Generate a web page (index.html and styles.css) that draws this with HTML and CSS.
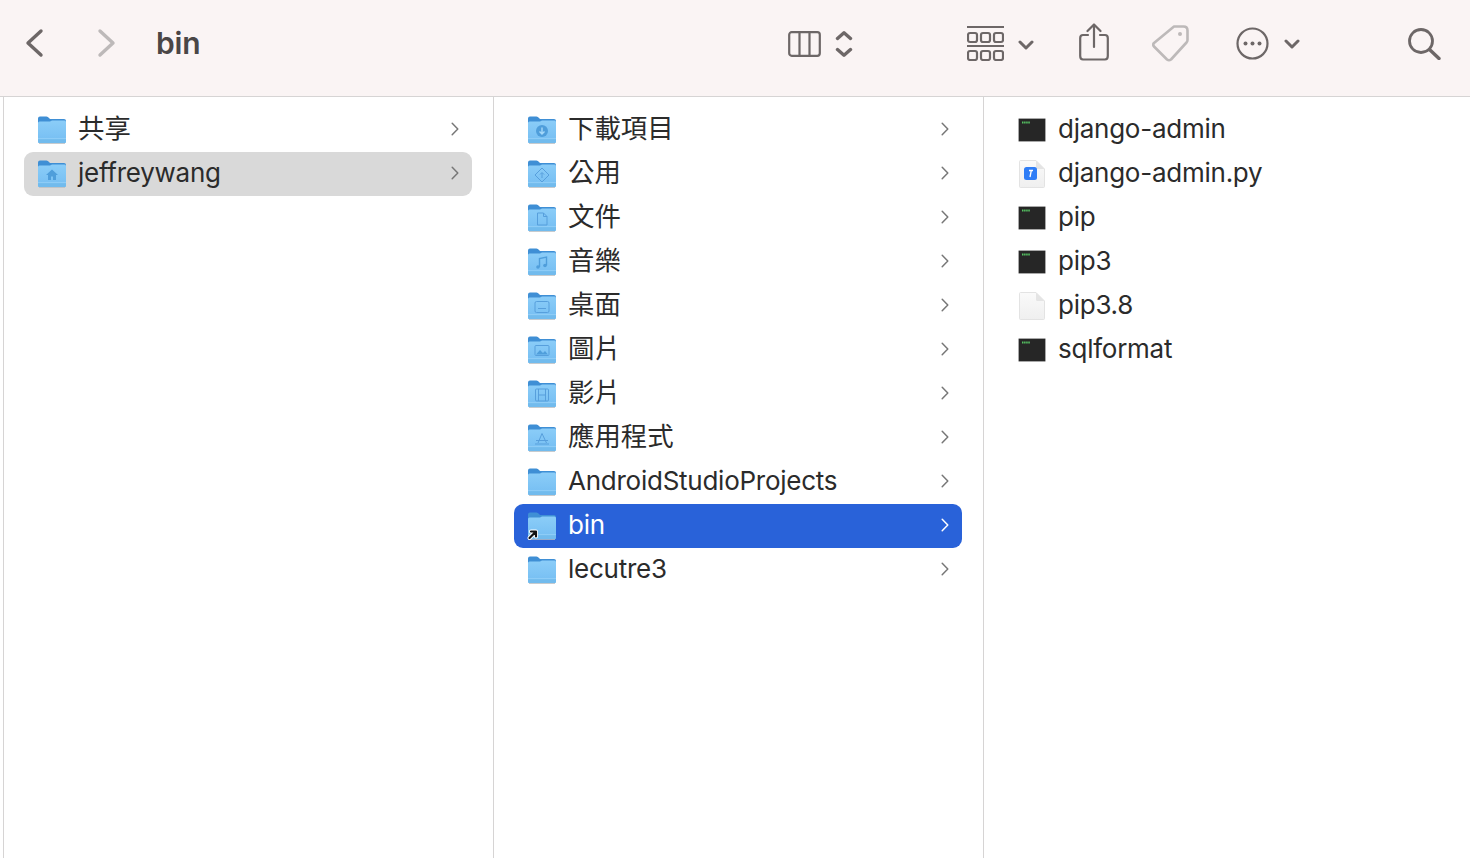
FILE: index.html
```html
<!DOCTYPE html>
<html lang="zh-Hant">
<head>
    <meta charset="UTF-8">
    <title>bin</title>
    <link rel="stylesheet" href="styles.css">
</head>

<body>
<svg class="defs" width="0" height="0">
    <defs>
        <linearGradient id="body" x1="0" y1="0" x2="0" y2="1">
            <stop offset="0" stop-color="#8bcdf8"/>
            <stop offset="1" stop-color="#74bdf2"/>
        </linearGradient>
        <linearGradient id="paper" x1="0" y1="0" x2="0" y2="1">
            <stop offset="0" stop-color="#fafafa"/>
            <stop offset="1" stop-color="#efefef"/>
        </linearGradient>
        <symbol id="folder" viewBox="0 0 28 28">
            <path d="M0 2.500Q0 .5 2 .5H8.500Q10 .5 11 2L12 3H26Q28 3 28 5V12H0Z" fill="#3f8fd5"/>
            <path d="M0 7Q0 5.500 1.500 5.500H12L14 4.500H26.500Q28 4.500 28 6V25.500Q28 27 26.500 27H1.500Q0 27 0 25.500Z" fill="url(#body)"/>
            <path d="M0 22.500H28V23.200H0Z" fill="#a5d9fa"/>
            <path d="M0 23.200H28V25.500Q28 27 26.500 27H1.500Q0 27 0 25.500Z" fill="#72bbed"/>
            <path d="M1 27H27V27.800H1Z" fill="#b9bec2"/>
        </symbol>
        <symbol id="terminal" viewBox="0 0 28 24">
            <rect x=".5" y=".5" width="27" height="23" rx="1" fill="#262626" stroke="#a8a8a8"/>
            <path d="M4 4.500H12" stroke="#56c463" stroke-width="1.800" stroke-dasharray="1.500 .6"/>
        </symbol>
        <symbol id="paperdoc" viewBox="0 0 26 28">
            <path d="M.5 1.500Q.5 .5 1.500 .5H17L25.500 9V26.500Q25.500 27.500 24.500 27.500H1.500Q.5 27.500 .5 26.500Z" fill="url(#paper)" stroke="#e3e3e3"/>
            <path d="M17 .5V7.500Q17 9 18.500 9H25.500Z" fill="#e4e4e4"/>
        </symbol>
        <symbol id="chev" viewBox="0 0 8 14">
            <path d="M1.200 1.200L6.800 7L1.200 12.800" fill="none" stroke="currentColor" stroke-width="1.500" stroke-linecap="round" stroke-linejoin="round"/>
        </symbol>
        <symbol id="drop" viewBox="0 0 16 10">
            <path d="M2 2L8 8L14 2" fill="none" stroke="currentColor" stroke-width="3" stroke-linecap="round" stroke-linejoin="round"/>
        </symbol>
    </defs>
</svg>

<!--工具列-->
<div class="toolbar">
    <svg class="tool nav-back" width="22" height="30" viewBox="0 0 22 30"><path d="M18 3L5 15L18 27" class="line thick"/></svg>
    <svg class="tool nav-forward" width="22" height="30" viewBox="0 0 22 30"><path d="M4 3L17 15L4 27" class="line thick"/></svg>
    <div class="title">bin</div>

    <svg class="tool view-columns" width="33" height="26" viewBox="0 0 33 26">
        <rect x="1.200" y="1.200" width="30.600" height="23.600" rx="2.500" class="line"/>
        <path d="M11.500 1.500V24.500M21.500 1.500V24.500" class="line"/>
    </svg>
    <svg class="tool view-updown" width="18" height="26" viewBox="0 0 18 26">
        <path d="M2.500 7.500L9 1.800L15.500 7.500M2.500 18.500L9 24.200L15.500 18.500" class="line thick"/>
    </svg>

    <svg class="tool group-by" width="37" height="35" viewBox="0 0 37 35">
        <path d="M0 1H37M0 20H37" class="line"/>
        <g class="line">
            <rect x="1" y="7" width="9" height="9" rx="2"/><rect x="14" y="7" width="9" height="9" rx="2"/><rect x="27" y="7" width="9" height="9" rx="2"/>
            <rect x="1" y="25" width="9" height="9" rx="2"/><rect x="14" y="25" width="9" height="9" rx="2"/><rect x="27" y="25" width="9" height="9" rx="2"/>
        </g>
    </svg>
    <svg class="tool group-drop" width="16" height="10"><use href="#drop"/></svg>

    <svg class="tool share" width="30" height="38" viewBox="0 0 30 38">
        <path d="M9 12H4Q1.200 12 1.200 15V33Q1.200 36.500 4 36.500H26Q28.800 36.500 28.800 33V15Q28.800 12 26 12H21" class="line"/>
        <path d="M15 24V1.500M8.500 8L15 1.500L21.500 8" class="line"/>
    </svg>

    <svg class="tool tag" width="37" height="37" viewBox="0 0 37 37">
        <path d="M22 1.500H31.500Q35.500 1.500 35.500 5.500V15Q35.500 16.500 34.500 17.500L19 34.500Q17 36 15 34.500L2 21.500Q.5 19.500 2 18Z" class="line light"/>
        <circle cx="28" cy="9" r="2" fill="#bdb9b9"/>
    </svg>

    <svg class="tool more" width="33" height="33" viewBox="0 0 33 33">
        <circle cx="16.500" cy="16.500" r="15" class="line"/>
        <circle cx="9.500" cy="16.500" r="2" fill="#6d6767"/><circle cx="16.500" cy="16.500" r="2" fill="#6d6767"/><circle cx="23.500" cy="16.500" r="2" fill="#6d6767"/>
    </svg>
    <svg class="tool more-drop" width="16" height="10"><use href="#drop"/></svg>

    <svg class="tool search" width="33" height="32" viewBox="0 0 33 32">
        <circle cx="13" cy="13" r="11.500" class="line thin-ring"/>
        <path d="M21.500 21.500L31 30.500" class="line thick"/>
    </svg>
</div>

<!--三欄-->
<div class="columns">
    <div class="column">
        <div class="row">
            <svg class="icon" width="28" height="28"><use href="#folder"/></svg>
            <span class="name han">共享</span>
            <svg class="chev" width="8" height="14"><use href="#chev"/></svg>
        </div>
        <div class="row inactive">
            <svg class="icon" viewBox="0 0 28 28" width="28" height="28">
                <use href="#folder" width="28" height="28"/>
                <path d="M14 9.500L8 15H10V20H13V16.500H15V20H18V15H20Z" fill="#4f9edb"/>
            </svg>
            <span class="name">jeffreywang</span>
            <svg class="chev" width="8" height="14"><use href="#chev"/></svg>
        </div>
    </div>

    <div class="column">
        <div class="row">
            <svg class="icon" viewBox="0 0 28 28" width="28" height="28">
                <use href="#folder" width="28" height="28"/>
                <circle cx="14" cy="15" r="6" fill="#4f9edb"/>
                <path d="M14 11.500V17.500M11.500 15.500L14 18L16.500 15.500" fill="none" stroke="#a5d9fa" stroke-width="1.400"/>
            </svg>
            <span class="name han">下載項目</span>
            <svg class="chev" width="8" height="14"><use href="#chev"/></svg>
        </div>
        <div class="row">
            <svg class="icon" viewBox="0 0 28 28" width="28" height="28">
                <use href="#folder" width="28" height="28"/>
                <path d="M14 8L21 15L14 22L7 15Z" class="glyph"/>
                <path d="M14 18V13M12 14.500L14 12.500L16 14.500" class="glyph"/>
            </svg>
            <span class="name han">公用</span>
            <svg class="chev" width="8" height="14"><use href="#chev"/></svg>
        </div>
        <div class="row">
            <svg class="icon" viewBox="0 0 28 28" width="28" height="28">
                <use href="#folder" width="28" height="28"/>
                <path d="M9.500 9H15.500L19 12.500V21H9.500ZM15.500 9V12.500H19" class="glyph"/>
            </svg>
            <span class="name han">文件</span>
            <svg class="chev" width="8" height="14"><use href="#chev"/></svg>
        </div>
        <div class="row">
            <svg class="icon" viewBox="0 0 28 28" width="28" height="28">
                <use href="#folder" width="28" height="28"/>
                <path d="M11.500 19V10.500L18.500 9V17.500" fill="none" stroke="#4f9edb" stroke-width="1.400"/>
                <circle cx="10" cy="19" r="1.800" fill="#4f9edb"/><circle cx="17" cy="17.500" r="1.800" fill="#4f9edb"/>
            </svg>
            <span class="name han">音樂</span>
            <svg class="chev" width="8" height="14"><use href="#chev"/></svg>
        </div>
        <div class="row">
            <svg class="icon" viewBox="0 0 28 28" width="28" height="28">
                <use href="#folder" width="28" height="28"/>
                <rect x="7" y="9.500" width="14" height="11" rx="1.500" class="glyph"/>
                <path d="M10 16.500H18" class="glyph"/>
            </svg>
            <span class="name han">桌面</span>
            <svg class="chev" width="8" height="14"><use href="#chev"/></svg>
        </div>
        <div class="row">
            <svg class="icon" viewBox="0 0 28 28" width="28" height="28">
                <use href="#folder" width="28" height="28"/>
                <rect x="7" y="9.500" width="14" height="10" rx="1" class="glyph"/>
                <path d="M8 18.500L12 14L15 17L17 15L20 18.500Z" fill="#4f9edb"/>
            </svg>
            <span class="name han">圖片</span>
            <svg class="chev" width="8" height="14"><use href="#chev"/></svg>
        </div>
        <div class="row">
            <svg class="icon" viewBox="0 0 28 28" width="28" height="28">
                <use href="#folder" width="28" height="28"/>
                <rect x="7.500" y="9" width="13" height="12" rx="1" class="glyph"/>
                <path d="M10.500 9V21M17.500 9V21M10.500 15H17.500" class="glyph"/>
            </svg>
            <span class="name han">影片</span>
            <svg class="chev" width="8" height="14"><use href="#chev"/></svg>
        </div>
        <div class="row">
            <svg class="icon" viewBox="0 0 28 28" width="28" height="28">
                <use href="#folder" width="28" height="28"/>
                <path d="M14 9.500L10 19M14 9.500L18.500 19M8 16.500H20M7 20H21" class="glyph"/>
            </svg>
            <span class="name han">應用程式</span>
            <svg class="chev" width="8" height="14"><use href="#chev"/></svg>
        </div>
        <div class="row">
            <svg class="icon" width="28" height="28"><use href="#folder"/></svg>
            <span class="name">AndroidStudioProjects</span>
            <svg class="chev" width="8" height="14"><use href="#chev"/></svg>
        </div>
        <div class="row selected">
            <svg class="icon alias" viewBox="0 0 28 28" width="28" height="28">
                <use href="#folder" width="28" height="28"/>
                <path d="M1.500 26L7 20.500M3 19.500H8V24.500" fill="none" stroke="#fff" stroke-width="4" stroke-linecap="round" stroke-linejoin="round"/>
                <path d="M1.500 26L7 20.500M3 19.500H8V24.500" fill="none" stroke="#111" stroke-width="2.200" stroke-linecap="round" stroke-linejoin="round"/>
            </svg>
            <span class="name">bin</span>
            <svg class="chev" width="8" height="14"><use href="#chev"/></svg>
        </div>
        <div class="row">
            <svg class="icon" width="28" height="28"><use href="#folder"/></svg>
            <span class="name">lecutre3</span>
            <svg class="chev" width="8" height="14"><use href="#chev"/></svg>
        </div>
    </div>

    <div class="column">
        <div class="row">
            <svg class="icon" width="28" height="24"><use href="#terminal"/></svg>
            <span class="name">django-admin</span>
        </div>
        <div class="row">
            <svg class="icon doc" viewBox="0 0 26 28" width="26" height="28">
                <use href="#paperdoc" width="26" height="28"/>
                <rect x="5" y="7" width="13" height="13" rx="2.500" fill="#2f7df6"/>
                <path d="M10 10.500H14M12.300 10.500L11 17" fill="none" stroke="#fff" stroke-width="1.300"/>
            </svg>
            <span class="name">django-admin.py</span>
        </div>
        <div class="row">
            <svg class="icon" width="28" height="24"><use href="#terminal"/></svg>
            <span class="name">pip</span>
        </div>
        <div class="row">
            <svg class="icon" width="28" height="24"><use href="#terminal"/></svg>
            <span class="name">pip3</span>
        </div>
        <div class="row">
            <svg class="icon doc" width="26" height="28"><use href="#paperdoc"/></svg>
            <span class="name">pip3.8</span>
        </div>
        <div class="row">
            <svg class="icon" width="28" height="24"><use href="#terminal"/></svg>
            <span class="name">sqlformat</span>
        </div>
    </div>
</div>
</body>
</html>
```

FILE: styles.css
```css
html,
body {
    margin: 0;
    padding: 0;
    height: 100%;
    overflow: hidden;
    background: #fff;
}
body {
    font-family: "Inter", "Noto Sans CJK TC", sans-serif;
    color: #2b2b2b;
}
.defs {
    display: block;
    height: 0;
}

/* toolbar */
.toolbar {
    height: 96px;
    display: flex;
    align-items: flex-start;
    background: #faf4f4;
    border-bottom: 1px solid #d6d4d4;
    color: #6d6767;
}
.tool {
    flex: none;
    display: block;
    color: #6d6767;
}
.line {
    fill: none;
    stroke: #6d6767;
    stroke-width: 2.2;
    stroke-linecap: round;
    stroke-linejoin: round;
}
.thick {
    stroke-width: 3.4;
}
.thin-ring {
    stroke-width: 2.8;
}
.light {
    stroke: #bdb9b9;
    stroke-width: 2.6;
}
.nav-back {
    margin: 28px 0 0 23px;
}
.nav-forward {
    margin: 28px 0 0 51px;
}
.nav-forward path {
    stroke: #bdb9b9;
}
.title {
    width: 632px;
    margin: 24px 0 0 38px;
    font-size: 30px;
    line-height: 38px;
    font-weight: 600;
    letter-spacing: -0.2px;
    color: #4a4646;
}
.view-updown {
    margin: 31px 0 0 14px;
}
.view-columns {
    margin-top: 31px;
}
.group-by {
    margin: 26px 0 0 114px;
}
.group-drop {
    margin: 40px 0 0 14px;
}
.share {
    margin: 23px 0 0 45px;
}
.tag {
    margin: 25px 0 0 43px;
}
.more {
    margin: 27px 0 0 47px;
}
.more-drop {
    margin: 39px 0 0 15px;
}
.search {
    margin: 28px 0 0 108px;
}

/* columns */
.columns {
    display: flex;
    height: 761px;
    padding-left: 3px;
}
.column {
    width: 490px;
    box-sizing: border-box;
    padding: 11px 21px 0 20px;
    border-left: 1px solid #d6d4d4;
    flex: none;
}
.row {
    height: 44px;
    box-sizing: border-box;
    padding: 0 13px 0 14px;
    display: flex;
    align-items: center;
    gap: 12px;
    border-radius: 9px;
}
.icon {
    flex: none;
    display: block;
}
.alias {
    overflow: visible;
}
.doc {
    margin-left: 1px;
    margin-right: 1px;
}
.name {
    flex: 1;
    font-size: 26px;
    line-height: 40px;
    letter-spacing: -0.25px;
    margin-top: -2px;
    white-space: nowrap;
}
.han {
    font-size: 26.4px;
    letter-spacing: 0;
    margin-top: -4px;
}
.chev {
    flex: none;
    color: #777;
    margin-top: -2px;
}
.glyph {
    fill: none;
    stroke: #579fdc;
    stroke-width: 1;
}
.inactive {
    background: #d9d9d9;
}
.selected {
    background: #2962d9;
    color: #fff;
}
.selected .chev {
    color: #fff;
}
```
